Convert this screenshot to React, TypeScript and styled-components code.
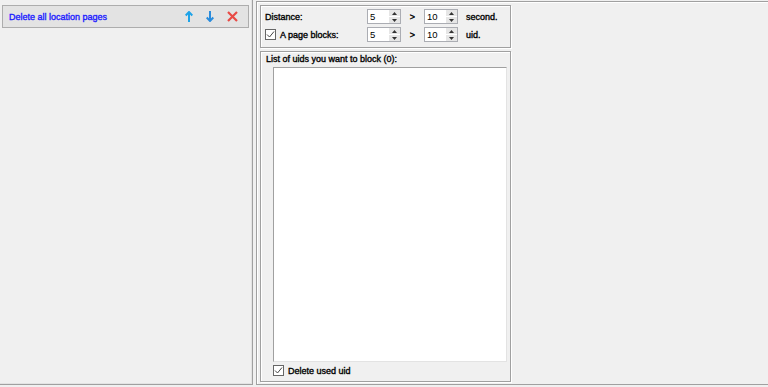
import styled, { createGlobalStyle } from "styled-components";

const GlobalStyle = createGlobalStyle`
  html, body {
    margin: 0;
    padding: 0;
    background: #f0f0f0;
  }
  body {
    font-family: "Liberation Sans", Arial, sans-serif;
    font-size: 9px;
    color: #000;
  }
`;

const Page = styled.div`
  width: 768px;
  height: 387px;
  display: flex;
  align-items: flex-start;
  gap: 3px;
  background: #f0f0f0;
  overflow: hidden;
`;

const LeftPanel = styled.div`
  width: 253px;
  height: 385px;
  box-sizing: border-box;
  border-right: 1px solid #a0a0a0;
  border-bottom: 1px solid #a0a0a0;
  box-shadow: inset -1px -1px 0 #e3e3e3;
  padding: 5px 0 0 2px;
`;

const Header = styled.div`
  width: 247px;
  height: 23px;
  box-sizing: border-box;
  background: #e3e3e3;
  border: 1px solid #adadad;
  display: flex;
  align-items: center;
  padding: 0 10px 0 6px;
`;

const HeaderTitle = styled.span`
  flex: 1;
  color: #2020ff;
  font-size: 9px;
  -webkit-text-stroke: 0.35px #2020ff;
`;

const IconRow = styled.div`
  display: flex;
  align-items: center;
  gap: 13px;
`;

const RightPanel = styled.div`
  flex: 1;
  margin-top: 1px;
  height: 384px;
  box-sizing: border-box;
  border-top: 1px solid #a0a0a0;
  border-left: 1px solid #a0a0a0;
  border-bottom: 1px solid #a0a0a0;
  box-shadow: inset 1px 1px 0 #ffffff;
  padding: 3px 3px 2px 3px;
  display: flex;
  flex-direction: column;
  gap: 3px;
`;

const GroupBox = styled.div<{ $grow?: boolean }>`
  width: 251px;
  box-sizing: border-box;
  border: 1px solid #a0a0a0;
  box-shadow: inset 1px 1px 0 #ffffff, 1px 1px 0 #ffffff;
  ${(p) => (p.$grow ? "flex: 1;" : "height: 43px;")}
  display: flex;
  flex-direction: column;
`;

const SettingsGrid = styled.div`
  display: grid;
  grid-template-columns: 102px 34px 23px 34px auto;
  grid-auto-rows: 15px;
  row-gap: 3px;
  padding: 3px 0 0 4px;
  align-items: center;
`;

const Label = styled.span`
  display: flex;
  align-items: center;
  gap: 4px;
  white-space: nowrap;
  -webkit-text-stroke: 0.35px #000;
`;

const Gt = styled.span`
  text-align: center;
  -webkit-text-stroke: 0.35px #000;
`;

const Unit = styled.span`
  padding-left: 8px;
  -webkit-text-stroke: 0.35px #000;
`;

const Spin = styled.div`
  width: 34px;
  height: 15px;
  box-sizing: border-box;
  border: 1px solid #abadb3;
  background: #fff;
  display: flex;
`;

const SpinValue = styled.span`
  flex: 1;
  padding-left: 2px;
  line-height: 13px;
  font-size: 9.5px;
`;

const SpinButtons = styled.div`
  width: 11px;
  display: flex;
  flex-direction: column;
  gap: 1px;
  background: #fff;
`;

const SpinButton = styled.div`
  flex: 1;
  background: #e6e6e6;
  display: flex;
  align-items: center;
  justify-content: center;
`;

const Check = styled.span`
  width: 11px;
  height: 11px;
  box-sizing: border-box;
  border: 1px solid #666;
  background: #fff;
  display: inline-flex;
  align-items: center;
  justify-content: center;
  flex: none;
`;

const GroupTitle = styled.div`
  padding: 2px 0 0 5px;
  height: 13px;
  line-height: 11px;
  -webkit-text-stroke: 0.35px #000;
`;

const ListArea = styled.div`
  margin-left: 12px;
  width: 234px;
  flex: 1;
  background: #fff;
  border-top: 1px solid #a0a0a0;
  border-left: 1px solid #a0a0a0;
  border-right: 1px solid #e3e3e3;
  border-bottom: 1px solid #e3e3e3;
  box-sizing: border-box;
`;

const Footer = styled.div`
  display: flex;
  align-items: center;
  gap: 4px;
  padding: 3px 0 5px 12px;
  -webkit-text-stroke: 0.35px #000;
`;

const Tick = () => (
  <svg width="9" height="9" viewBox="0 0 9 9">
    <path d="M1 4.5 L3.5 7 L8 1.5" fill="none" stroke="#444" strokeWidth="1" />
  </svg>
);

const Caret = ({ up }: { up?: boolean }) => (
  <svg width="5" height="3" viewBox="0 0 5 3">
    <path d={up ? "M0 3 L2.5 0 L5 3 Z" : "M0 0 L2.5 3 L5 0 Z"} fill="#333" />
  </svg>
);

const SpinBox = ({ value }: { value: string }) => (
  <Spin>
    <SpinValue>{value}</SpinValue>
    <SpinButtons>
      <SpinButton>
        <Caret up />
      </SpinButton>
      <SpinButton>
        <Caret />
      </SpinButton>
    </SpinButtons>
  </Spin>
);

const ArrowUp = () => (
  <svg width="8" height="11" viewBox="0 0 8 11">
    <path d="M4 1 L4 11" stroke="#1ea3e8" strokeWidth="2" />
    <path d="M0.7 4.5 L4 1 L7.3 4.5" fill="none" stroke="#1ea3e8" strokeWidth="2" />
  </svg>
);

const ArrowDown = () => (
  <svg width="8" height="11" viewBox="0 0 8 11">
    <path d="M4 0 L4 10" stroke="#2a8cdc" strokeWidth="2" />
    <path d="M0.7 6.5 L4 10 L7.3 6.5" fill="none" stroke="#2a8cdc" strokeWidth="2" />
  </svg>
);

const CloseX = () => (
  <svg width="11" height="11" viewBox="0 0 11 11">
    <path d="M1 1 L10 10 M10 1 L1 10" stroke="#e84a45" strokeWidth="2.2" />
  </svg>
);

export default function App() {
  return (
    <>
      <GlobalStyle />
      <Page>
        <LeftPanel>
          <Header>
            <HeaderTitle>Delete all location pages</HeaderTitle>
            <IconRow>
              <ArrowUp />
              <ArrowDown />
              <CloseX />
            </IconRow>
          </Header>
        </LeftPanel>
        <RightPanel>
          <GroupBox>
            <SettingsGrid>
              <Label>Distance:</Label>
              <SpinBox value="5" />
              <Gt>&gt;</Gt>
              <SpinBox value="10" />
              <Unit>second.</Unit>
              <Label>
                <Check>
                  <Tick />
                </Check>
                A page blocks:
              </Label>
              <SpinBox value="5" />
              <Gt>&gt;</Gt>
              <SpinBox value="10" />
              <Unit>uid.</Unit>
            </SettingsGrid>
          </GroupBox>
          <GroupBox $grow>
            <GroupTitle>List of uids you want to block (0):</GroupTitle>
            <ListArea />
            <Footer>
              <Check>
                <Tick />
              </Check>
              Delete used uid
            </Footer>
          </GroupBox>
        </RightPanel>
      </Page>
    </>
  );
}
